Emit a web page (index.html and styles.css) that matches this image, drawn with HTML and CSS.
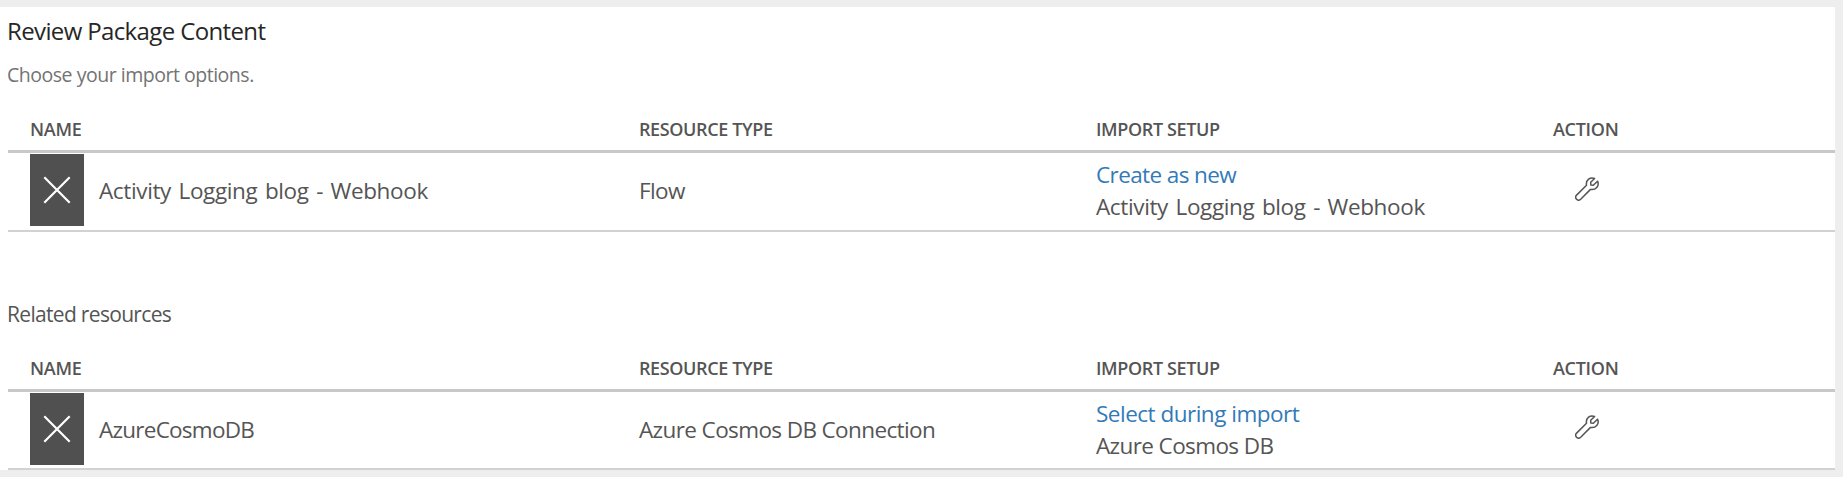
FILE: index.html
```html
<!DOCTYPE html>
<html lang="en">
<head>
<meta charset="utf-8">
<title>Review Package Content</title>
<link rel="stylesheet" href="styles.css">
</head>
<body>
<svg width="0" height="0" class="defs" aria-hidden="true">
  <symbol id="cross" viewBox="0 0 28 28"><path d="M1.3 1.3 26.7 26.7M26.7 1.3 1.3 26.7"/></symbol>
  <symbol id="wrench" viewBox="0 0 24 24"><path d="M19.6 1.5C15.2-.4 10.6 3 11.5 8.2L1.6 18.1C-1 21 2.8 24.8 5.7 22.2L15.5 12.4C20.6 13.5 24.8 8.8 22.5 4.2L18.3 8.2 15.8 7.9 15.7 5.3Z"/></symbol>
</svg>
<main class="panel">
  <h1 class="title">Review Package Content</h1>
  <p class="subtitle">Choose your import options.</p>
  <section class="table">
    <div class="row head"><span class="h-name">NAME</span><span class="h-type">RESOURCE TYPE</span><span class="h-setup">IMPORT SETUP</span><span class="h-action">ACTION</span></div>
    <div class="row item">
      <div class="name"><span class="status"><svg class="cross"><use href="#cross"/></svg></span><span class="label wide">Activity Logging blog - Webhook</span></div>
      <div class="label">Flow</div>
      <div class="setup label"><a>Create as new</a><span class="wide">Activity Logging blog - Webhook</span></div>
      <div class="action"><svg class="wrench"><use href="#wrench"/></svg></div>
    </div>
  </section>
  <h2 class="related">Related resources</h2>
  <section class="table last">
    <div class="row head"><span class="h-name">NAME</span><span class="h-type">RESOURCE TYPE</span><span class="h-setup">IMPORT SETUP</span><span class="h-action">ACTION</span></div>
    <div class="row item">
      <div class="name"><span class="status"><svg class="cross"><use href="#cross"/></svg></span><span class="label tight">AzureCosmoDB</span></div>
      <div class="label">Azure Cosmos DB Connection</div>
      <div class="setup label"><a class="select">Select during import</a><span>Azure Cosmos DB</span></div>
      <div class="action"><svg class="wrench"><use href="#wrench"/></svg></div>
    </div>
  </section>
</main>
</body>
</html>
```
FILE: styles.css
```css
* { box-sizing: border-box; }
body {
  margin: 0;
  padding: 7px 8px 7px 0;
  height: 477px;
  background: #eee;
  color: #555;
  font-family: "Open Sans", "Noto Sans", sans-serif;
  overflow: hidden;
}
.defs { display: none; }
.panel { height: 463px; padding: 8px 0 0 8px; background: #fff; }
.title { margin: 0 0 0 -1px; font-size: 24px; line-height: 32px; font-weight: 400; color: #262626; letter-spacing: -0.63px; }
.subtitle { margin: 14px 0 27px -1px; font-size: 19.5px; line-height: 28px; color: #737373; letter-spacing: -0.48px; }
.row { display: grid; grid-template-columns: 609px 457px 457px 1fr; padding-left: 22px; }
.head { height: 37px; border-bottom: 3px solid #c8c8c8; font-size: 18px; line-height: 26px; font-weight: 600; letter-spacing: -0.38px; color: #555; }
.h-name { letter-spacing: -0.25px; }
.h-action { letter-spacing: -0.3px; }
.item { align-items: center; padding-top: 1px; padding-bottom: 4px; border-bottom: 2px solid #d2d2d2; font-size: 22.5px; line-height: 32px; letter-spacing: -0.61px; white-space: nowrap; }
.last .item { padding-bottom: 3px; }
.name { display: flex; align-items: center; gap: 15px; }
.status { display: flex; align-items: center; justify-content: center; width: 54px; height: 72px; background: #505050; }
.cross { width: 28px; height: 28px; fill: none; stroke: #fff; stroke-width: 2.2; }
.label { padding-top: 2px; }
.wide { letter-spacing: -0.36px; word-spacing: 2px; }
.tight { letter-spacing: -0.75px; }
.setup { display: flex; flex-direction: column; align-items: flex-start; }
.setup a { color: #337ab7; }
.setup .select { letter-spacing: -0.5px; }
.action { display: flex; padding: 0 0 2px 22px; }
.last .action { padding-bottom: 4px; }
.wrench { width: 24px; height: 24px; fill: none; stroke: #555; stroke-width: 1.5; stroke-linejoin: round; overflow: visible; }
.related { margin: 66px 0 25px -1px; font-size: 21px; line-height: 32px; font-weight: 400; letter-spacing: -0.68px; }
```
